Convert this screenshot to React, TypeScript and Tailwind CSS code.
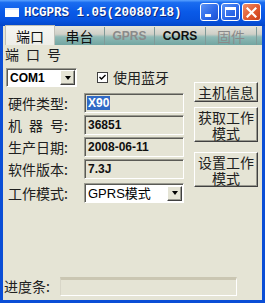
import React from "react";

const CJK = '"Noto Sans CJK SC", "Noto Sans", sans-serif';
const SANS = '"Liberation Sans", "Noto Sans CJK SC", sans-serif';

function Sunken({ children, className = "" }: { children?: React.ReactNode; className?: string }) {
  return (
    <div
      className={`border border-t-[#9a9a90] border-l-[#9a9a90] border-b-white border-r-white shadow-[inset_1px_1px_0_#5a5a55] ${className}`}
    >
      {children}
    </div>
  );
}

function DropBtn() {
  return (
    <div className="w-[15px] h-[15px] mr-[1px] bg-[#E5E4D5] border border-t-white border-l-white border-b-[#404040] border-r-[#404040] shadow-[inset_-1px_-1px_0_#9a9a90] flex items-center justify-center">
      <div className="w-0 h-0 border-l-[3.5px] border-r-[3.5px] border-t-[4px] border-l-transparent border-r-transparent border-t-black" />
    </div>
  );
}

function RaisedBtn({ lines, className = "" }: { lines: string[]; className?: string }) {
  return (
    <div
      className={`bg-[#E5E4D5] border border-t-white border-l-white border-b-[#404040] border-r-[#404040] shadow-[inset_-1px_-1px_0_#9a9a90] flex flex-col items-center justify-center text-center text-[14px] text-[#202020] ${className}`}
      style={{ fontFamily: CJK }}
    >
      {lines.map((l) => (
        <div key={l} className="h-[16px] leading-[16px] overflow-visible">
          {l}
        </div>
      ))}
    </div>
  );
}

function Tab({ label, w, active, dim }: { label: string; w: number; active?: boolean; dim?: boolean }) {
  const base = active
    ? "h-[20px] bg-[linear-gradient(180deg,#F6F6F2_0%,#EEEEE8_100%)] border-l border-t border-r border-[#c0c0b8] z-10"
    : "h-[18px] bg-[linear-gradient(180deg,#E2E2DA_0%,#CFCFC7_40%,#8FBAB6_55%,#72A5A1_100%)] border-r border-[#7f9a98]";
  const latin = /^[A-Z]+$/.test(label);
  return (
    <div
      className={`${base} shrink-0 flex items-center justify-center ${dim ? "text-[#8a8a8a]" : "text-[#101010]"} ${latin ? "font-bold text-[12px]" : "text-[14px]"} leading-[16px]`}
      style={{ width: w, fontFamily: latin ? SANS : CJK }}
    >
      {label}
    </div>
  );
}

function FieldRow({ label, value, selected }: { label: string; value: string; selected?: boolean }) {
  return (
    <div className="h-[20px] flex items-center">
      <div className="w-[81px] pl-[5px] text-[14px] leading-[16px] text-[#202020] whitespace-pre" style={{ fontFamily: CJK }}>
        {label}
      </div>
      <Sunken className="w-[100px] h-[20px] flex items-center pl-[2px]">
        <span
          className={`text-[12px] font-bold leading-[12px] px-[1px] py-[1px] ${selected ? "bg-[#316AC5] text-white" : "text-[#101010]"}`}
          style={{ fontFamily: SANS }}
        >
          {value}
        </span>
      </Sunken>
    </div>
  );
}

export default function App() {
  return (
    <div className="w-[265px] h-[303px] flex flex-col bg-[#0A4ED6] overflow-hidden">
      {/* Title bar */}
      <div className="h-[26px] shrink-0 flex bg-[linear-gradient(180deg,#5AA2FF_0%,#1A6CF0_10%,#0A5AE8_45%,#0752DE_80%,#0446C8_100%)]">
        <div className="ml-[5px] mt-[8px] w-[14px] h-[9px] bg-white border-t-[2px] border-[#E8F0FF]" />
        <span
          className="ml-[5px] mt-[5px] h-[16px] leading-[16px] text-white font-bold text-[12.5px] [text-shadow:1px_1px_0_#0A2A80]"
          style={{ fontFamily: '"Liberation Mono", monospace' }}
        >
          HCGPRS 1.05(20080718)
        </span>
        <div className="ml-auto mr-[4px] mt-[3px] flex gap-[2px]">
          <div className="w-[19px] h-[18px] rounded-[3px] border border-white bg-[linear-gradient(135deg,#5B93F5_0%,#2A66E8_60%,#1C50D0_100%)] relative">
            <div className="absolute left-[4px] bottom-[3px] w-[6px] h-[3px] bg-white" />
          </div>
          <div className="w-[19px] h-[18px] rounded-[3px] border border-white bg-[linear-gradient(135deg,#5B93F5_0%,#2A66E8_60%,#1C50D0_100%)] flex items-center justify-center">
            <div className="w-[11px] h-[10px] border border-white border-t-[3px]" />
          </div>
          <div className="w-[19px] h-[18px] rounded-[3px] border border-white bg-[linear-gradient(135deg,#F0906A_0%,#E25A30_55%,#C8401C_100%)] flex items-center justify-center">
            <svg width="11" height="11" viewBox="0 0 11 11">
              <path d="M1.5 1.5 L9.5 9.5 M9.5 1.5 L1.5 9.5" stroke="white" strokeWidth="2.2" strokeLinecap="square" />
            </svg>
          </div>
        </div>
      </div>

      {/* Body */}
      <div className="flex-1 mx-[3px] mb-[3px] bg-[#E5E4D5] flex flex-col">
        {/* Tabs */}
        <div className="h-[19px] shrink-0 flex items-end pl-[2px] bg-[#E5E4D5]">
          <Tab label="端口" w={50} active />
          <Tab label="串台" w={50} />
          <Tab label="GPRS" w={50} dim />
          <Tab label="CORS" w={51} />
          <Tab label="固件" w={51} dim />
          <div className="h-[18px] flex-1 bg-[linear-gradient(180deg,#E2E2DA_0%,#CFCFC7_40%,#8FBAB6_55%,#72A5A1_100%)]" />
        </div>

        <div className="flex">
          {/* Left column */}
          <div className="w-[191px] flex flex-col">
            <div className="mt-[2px] h-[15px] leading-[15px] pl-[2px] text-[14px] text-[#202020] whitespace-pre" style={{ fontFamily: CJK }}>
              {"端\u2002口\u2002号"}
            </div>
            <div className="mt-[6px] h-[19px] flex items-center">
              <Sunken className="ml-[3px] w-[71px] h-[19px] bg-white flex items-center justify-between">
                <span className="pl-[3px] text-[12px] font-bold text-black" style={{ fontFamily: SANS }}>
                  COM1
                </span>
                <DropBtn />
              </Sunken>
              <div className="ml-[20px] w-[11px] h-[11px] bg-white border border-[#404040] flex items-center justify-center">
                <svg width="7" height="7" viewBox="0 0 7 7">
                  <path d="M0.5 3 L2.5 5 L6.5 1" stroke="black" strokeWidth="1.4" fill="none" />
                </svg>
              </div>
              <span className="ml-[5px] text-[14px] text-[#202020]" style={{ fontFamily: CJK }}>
                使用蓝牙
              </span>
            </div>

            <div className="mt-[6px] flex flex-col gap-[2px]">
              <FieldRow label="硬件类型:" value="X90" selected />
              <FieldRow label={"机\u2002器\u2002号:"} value="36851" />
              <FieldRow label="生产日期:" value="2008-06-11" />
              <FieldRow label="软件版本:" value="7.3J" />
              <div className="h-[20px] flex items-center mt-[2px]">
                <div className="w-[81px] pl-[5px] text-[14px] leading-[16px] text-[#202020]" style={{ fontFamily: CJK }}>
                  工作模式:
                </div>
                <Sunken className="w-[100px] h-[20px] bg-white flex items-center justify-between">
                  <span className="pl-[3px] text-[13px] text-black" style={{ fontFamily: SANS }}>
                    GPRS<span style={{ fontFamily: CJK }}>模式</span>
                  </span>
                  <DropBtn />
                </Sunken>
              </div>
            </div>
          </div>

          {/* Right column buttons */}
          <div className="w-[64px] flex flex-col pt-[37px]">
            <RaisedBtn className="h-[20px]" lines={["主机信息"]} />
            <RaisedBtn className="h-[35px] mt-[5px]" lines={["获取工作", "模式"]} />
            <RaisedBtn className="h-[35px] mt-[10px]" lines={["设置工作", "模式"]} />
          </div>
        </div>

        {/* Progress */}
        <div className="mt-auto mb-[4px] h-[19px] flex items-center">
          <span className="ml-[1px] w-[56px] text-[14px] text-[#202020]" style={{ fontFamily: CJK }}>
            进度条:
          </span>
          <div className="w-[177px] h-[19px] border-t-[3px] border-t-[#CAC6B2] border-l border-l-[#d8d6c8] border-b border-b-white border-r border-r-white" />
        </div>
      </div>
    </div>
  );
}
